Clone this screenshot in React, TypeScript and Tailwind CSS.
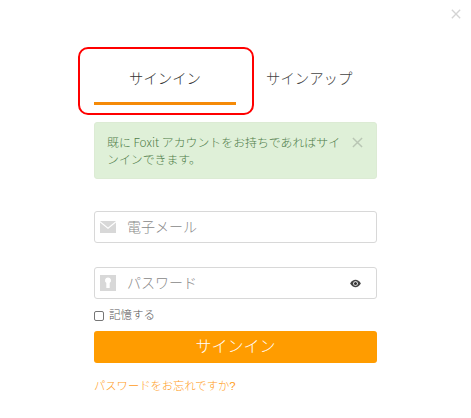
import React from 'react';

const Close = ({ className }: { className: string }) => (
  <svg viewBox="0 0 12 12" className={className} fill="none" stroke="currentColor" strokeWidth="1.6">
    <path d="M1 1l10 10M11 1L1 11" />
  </svg>
);

export default function App() {
  return (
    <div className="relative w-[471px] h-[418px] bg-white overflow-hidden font-['Liberation_Sans','Noto_Sans_CJK_JP',sans-serif]">
      {/* dialog close */}
      <div className="flex justify-end pt-[9px] pr-[10px] h-[48px]">
        <Close className="w-[10px] h-[10px] text-[#d4d4d4]" />
      </div>

      <div className="ml-[94px] w-[283px]">
        {/* Tabs */}
        <div className="flex h-[57px]">
          <div className="w-[142px] h-[57px] border-b-[3px] border-[#f58a07] flex items-center justify-center pt-[9px] text-[14.4px] font-light text-[#333]">
            サインイン
          </div>
          <div className="flex-1 h-[57px] flex items-center pl-[30px] pt-[9px] pb-[3px] text-[14.4px] font-light text-[#444]">
            サインアップ
          </div>
        </div>

        {/* Alert */}
        <div className="mt-[17px] h-[57px] rounded-[3px] bg-[#dff0d8] border border-[#dcebd4] flex pl-[12px] pt-[10px] pr-[12px]">
          <p className="w-[238px] text-[11.9px] leading-[17px] font-light text-[#4f7d49] font-['Noto_Sans_CJK_JP',sans-serif]">
            既に Foxit アカウントをお持ちであればサインインできます。
          </p>
          <Close className="w-[11px] h-[11px] mt-[4px] ml-[7px] text-[#b9c6b4]" />
        </div>

        {/* Email */}
        <div className="mt-[32px] h-[32px] rounded-[3px] border border-[#d8d8d8] flex items-center pl-[5px]">
          <svg viewBox="0 0 16 12" className="w-[16px] h-[12px]">
            <path d="M0 0h16L8 6.5z" fill="#d8d8d8" />
            <path d="M0 1.6V12h16V1.6L8 8z" fill="#d8d8d8" />
          </svg>
          <span className="ml-[11px] text-[14px] font-light text-[#888]">電子メール</span>
        </div>

        {/* Password */}
        <div className="mt-[24px] h-[32px] rounded-[3px] border border-[#d8d8d8] flex items-center pl-[5px] pr-[15px]">
          <svg viewBox="0 0 16 16" className="w-[16px] h-[16px]">
            <path
              fillRule="evenodd"
              fill="#d8d8d8"
              d="M0 0h16v16H0zM8 2.5a3 3 0 0 0-1.7 5.5V13h3.4V8A3 3 0 0 0 8 2.5z"
            />
          </svg>
          <span className="ml-[11px] text-[14px] font-light text-[#888]">パスワード</span>
          <svg viewBox="0 0 12 10" className="w-[11px] h-[9px] ml-auto">
            <path d="M0 5c3-5.5 9-5.5 12 0-3 5.5-9 5.5-12 0z" fill="#444" />
            <circle cx="6" cy="5" r="2.6" fill="#fff" />
            <circle cx="6" cy="5" r="1.7" fill="#333" />
          </svg>
        </div>

        {/* Remember */}
        <label className="mt-[10px] h-[14px] flex items-center text-[11.5px] font-light text-[#555]">
          <span className="w-[10px] h-[10px] rounded-[2px] border border-[#767676] bg-white" />
          <span className="ml-[5px]">記憶する</span>
        </label>

        <button className="mt-[8px] w-full h-[32px] rounded-[3px] bg-[#ff9c00] text-white text-[16px] font-light">
          サインイン
        </button>

        <div className="mt-[15px] text-[11.3px] leading-[16px] font-light text-[#ff9c1a]">パスワードをお忘れですか?</div>
      </div>

      {/* Red annotation */}
      <div className="absolute left-[78px] top-[47px] w-[176px] h-[68px] rounded-[10px] border-2 border-[#f00]" />
    </div>
  );
}
